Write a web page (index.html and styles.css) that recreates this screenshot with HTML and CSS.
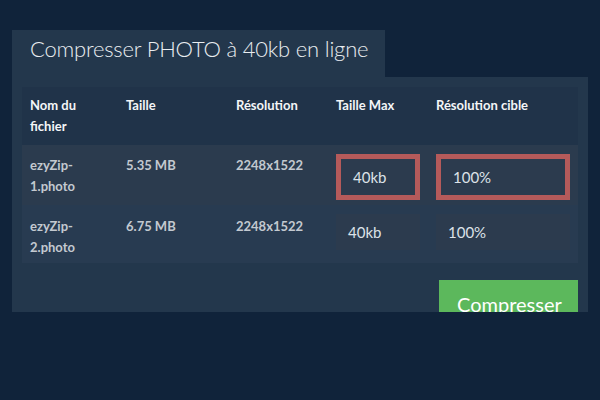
FILE: index.html
```html
<!DOCTYPE html>
<html lang="fr">
<head>
<meta charset="utf-8">
<title>Compresser PHOTO</title>
<link rel="stylesheet" href="styles.css">
</head>
<body>
<div class="page">
  <div class="tab"><h1 class="title">Compresser PHOTO à 40kb en ligne</h1></div>
  <div class="panel">
    <div class="table">
      <div class="row head">
        <div class="cell">Nom du fichier</div>
        <div class="cell">Taille</div>
        <div class="cell">Résolution</div>
        <div class="cell">Taille Max</div>
        <div class="cell">Résolution cible</div>
      </div>
      <div class="row r1">
        <div class="cell">ezyZip-<br>1.photo</div>
        <div class="cell">5.35 MB</div>
        <div class="cell">2248x1522</div>
        <div class="cell icell"><div class="input hl">40kb</div></div>
        <div class="cell icell"><div class="input hl">100%</div></div>
      </div>
      <div class="row r2">
        <div class="cell">ezyZip-<br>2.photo</div>
        <div class="cell">6.75 MB</div>
        <div class="cell">2248x1522</div>
        <div class="cell icell"><div class="input">40kb</div></div>
        <div class="cell icell"><div class="input">100%</div></div>
      </div>
    </div>
    <div class="actions"><button class="btn">Compresser</button></div>
  </div>
</div>
</body>
</html>
```
FILE: styles.css
```css
html, body {
  margin: 0;
  padding: 0;
  background: #10233a;
  font-family: Lato, "Noto Sans", sans-serif;
}
.page {
  padding: 30px 12px 0 12px;
}
.tab {
  width: 373px;
  background: #23374c;
  padding: 4px 18px 13px 18px;
  box-sizing: border-box;
}
.title {
  margin: 0;
  font-size: 22px;
  letter-spacing: -0.2px;
  line-height: 30px;
  font-weight: 300;
  color: #e9edf0;
  white-space: nowrap;
}
.panel {
  background: #23374c;
  height: 235px;
  overflow: hidden;
  padding: 10px;
  box-sizing: border-box;
}
.table {
  display: flex;
  flex-direction: column;
}
.row {
  display: grid;
  grid-template-columns: 96px 110px 100px 100px 150px;
}
.head {
  background: #203349;
  height: 58px;
  color: #f4f6f8;
  font-weight: 700;
}
.r1 {
  background: #2b3b4e;
  height: 60px;
}
.r2 {
  background: #283b51;
  height: 58px;
}
.cell {
  padding: 8px 8px 0 8px;
  font-size: 13px;
  line-height: 21px;
}
.r1 .cell, .r2 .cell {
  padding-top: 10px;
  color: #c3c9d0;
  font-weight: 700;
}
.r2 .cell { padding-top: 11px; }
.r1 .icell, .r2 .icell { padding-top: 9px; }
.input {
  box-sizing: border-box;
  height: 36px;
  background: #2c3b4e;
  padding: 0 12px;
  font-size: 15px;
  line-height: 36px;
  color: #dde2e8;
  font-weight: 400;
}
.input.hl {
  height: 46px;
  border: 5px solid #b55a5a;
  line-height: 36px;
}
.actions {
  display: flex;
  justify-content: flex-end;
  margin-top: 17px;
}
.btn {
  background: #5cb85c;
  border: none;
  color: #ffffff;
  font-family: Lato, "Noto Sans", sans-serif;
  font-size: 20px;
  line-height: 28px;
  padding: 10px 18px;
  width: 139px;
  text-align: left;
}
```
